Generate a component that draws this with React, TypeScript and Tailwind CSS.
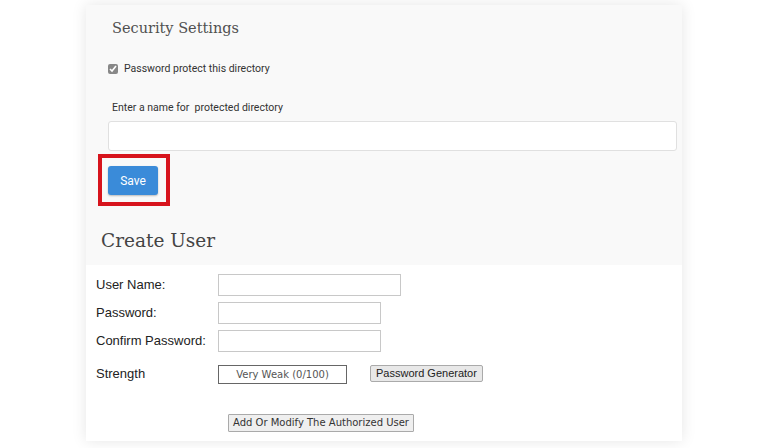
import React from "react";

const serif = { fontFamily: '"DejaVu Serif", "Liberation Serif", serif' };

export default function App() {
  return (
    <div className="w-[768px] h-[448px] bg-white overflow-hidden pt-[5px]">
      {/* Card */}
      <div className="ml-[86px] w-[596px] h-[436px] bg-white shadow-[0_0_14px_rgba(0,0,0,0.10)] flex flex-col">
        {/* Security settings section */}
        <div className="h-[260px] bg-[#f9f9f9] pl-[22px] pt-[9px] font-['Roboto',sans-serif]">
          <h2 className="ml-[4px] text-[14.5px] leading-[28px] text-[#505050]" style={serif}>
            Security Settings
          </h2>

          <label className="mt-[19px] flex items-center h-[16px] gap-[6px] text-[10.5px] text-[#333]">
            <input type="checkbox" defaultChecked className="w-[10px] h-[10px] accent-[#888]" />
            Password protect this directory
          </label>

          <p className="mt-[23px] ml-[4px] h-[16px] leading-[16px] text-[10.5px] text-[#333]">
            Enter a name for&nbsp; protected directory
          </p>

          <input
            type="text"
            className="mt-[5px] block w-[569px] h-[30px] bg-white border border-[#e0e0e0] rounded-[3px]"
          />

          <div className="mt-[3px] -ml-[10px] w-[72px] h-[52px] border-4 border-[#d7141d] pl-[6px] pt-[8px]">
            <button className="w-[50px] h-[29px] rounded-[3px] bg-[#3a8bd9] text-white text-[12px] shadow-[0_1px_2px_rgba(0,0,0,0.25)]">
              Save
            </button>
          </div>

          <h2 className="mt-[20px] -ml-[7px] text-[18.5px] leading-[30px] text-[#444]" style={serif}>
            Create User
          </h2>
        </div>

        {/* Create user form */}
        <div className="pl-[10px] pt-[9px] font-['Liberation_Sans',Arial,sans-serif] text-[13px] text-[#222]">
          <div className="flex flex-col gap-[6px]">
            <div className="flex items-center h-[22px]">
              <span className="w-[122px]">User Name:</span>
              <input className="w-[183px] h-[22px] border border-[#c8c8c8]" />
            </div>
            <div className="flex items-center h-[22px]">
              <span className="w-[122px]">Password:</span>
              <input type="password" className="w-[163px] h-[22px] border border-[#c8c8c8]" />
            </div>
            <div className="flex items-center h-[22px]">
              <span className="w-[122px]">Confirm Password:</span>
              <input type="password" className="w-[163px] h-[22px] border border-[#c8c8c8]" />
            </div>
          </div>

          <div className="mt-[13px] flex items-center h-[19px]">
            <span className="w-[122px] -mt-[2px]">Strength</span>
            <div className="w-[129px] h-[19px] border border-[#666] flex items-center justify-center text-[10px] text-[#555] font-['DejaVu_Sans',Verdana,sans-serif]">
              Very Weak (0/100)
            </div>
            <button className="ml-[23px] -mt-[3px] h-[17px] px-[5px] bg-[#e8e8e8] border border-[#aaa] rounded-[2px] text-[11px] leading-[15px] text-[#222]">
              Password Generator
            </button>
          </div>

          <div className="mt-[28px] ml-[132px]">
            <button className="h-[18px] px-[4px] bg-[#efefef] border border-[#aaa] rounded-[1px] text-[10px] leading-[16px] text-[#333] font-['DejaVu_Sans',Verdana,sans-serif]">
              Add Or Modify The Authorized User
            </button>
          </div>
        </div>
      </div>
    </div>
  );
}
